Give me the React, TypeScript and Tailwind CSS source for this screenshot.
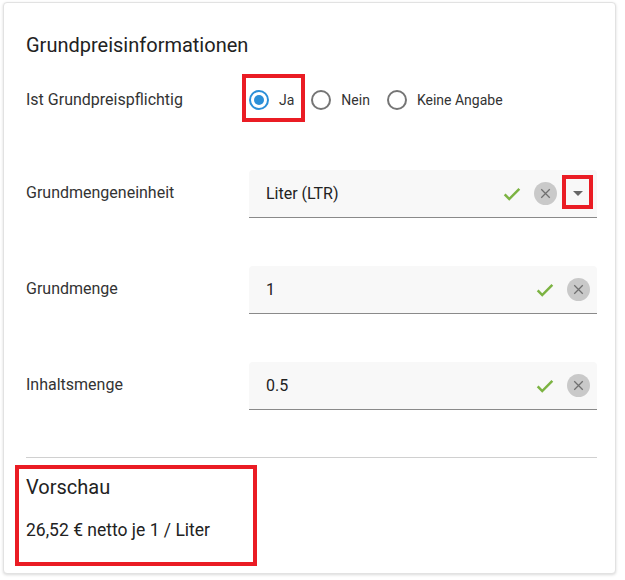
import React from "react";

const Check: React.FC = () => (
  <svg viewBox="0 0 24 24" className="w-[22px] h-[22px]">
    <path d="M4 12.5l5 5L20 6.5" fill="none" stroke="#7cb342" strokeWidth="2.8" />
  </svg>
);

const Clear: React.FC = () => (
  <span className="flex items-center justify-center w-[23px] h-[23px] rounded-full bg-[#c9c9c9]">
    <svg viewBox="0 0 24 24" className="w-[17px] h-[17px]">
      <path d="M6 6l12 12M18 6L6 18" fill="none" stroke="#6f6f6f" strokeWidth="1.8" />
    </svg>
  </span>
);

const Radio: React.FC<{ label: string; checked?: boolean }> = ({ label, checked }) => (
  <label className="flex items-center gap-[10px]">
    <span
      className={
        checked
          ? "flex items-center justify-center w-[20px] h-[20px] rounded-full border-2 border-[#2b8fd8]"
          : "flex items-center justify-center w-[20px] h-[20px] rounded-full border-2 border-[#757575]"
      }
    >
      {checked && <span className="w-[10px] h-[10px] rounded-full bg-[#2b8fd8]" />}
    </span>
    <span className="text-[14px] text-[#333]">{label}</span>
  </label>
);

const Field: React.FC<{ label: string; value: string; select?: boolean }> = ({
  label,
  value,
  select,
}) => (
  <div className="flex items-center h-[48px]">
    <div className="w-[223px] text-[16px] text-[#333] -mt-[3px]">{label}</div>
    <div className="relative flex-1 h-full flex items-center bg-[#f8f8f8] border-b border-[#8a8a8a] rounded-t-[4px] pl-[17px] pr-[7px]">
      <span className="flex-1 text-[16px] text-[#222]">{value}</span>
      <span className="mr-[11px]">
        <Check />
      </span>
      <Clear />
      {select && (
        <span className="relative ml-[9px] w-[24px] h-[24px] flex items-center justify-center">
          <span className="w-0 h-0 border-l-[5px] border-r-[5px] border-t-[5px] border-l-transparent border-r-transparent border-t-[#666]" />
          <span className="absolute -left-[4px] -top-[7px] w-[31px] h-[34px] border-4 border-[#ea1c24]" />
        </span>
      )}
    </div>
  </div>
);

export default function App() {
  return (
    <div className="w-[625px] h-[580px] bg-white pt-[2px] pl-[3px] font-['Roboto',sans-serif]">
      <div className="w-[613px] h-[572px] rounded-[4px] border border-[#e2e2e2] shadow-[0_1px_3px_rgba(0,0,0,0.15)] bg-white pl-[22px] pr-[18px] pt-[30px]">
        <h2 className="text-[20px] leading-6 text-[#222]">Grundpreisinformationen</h2>

        <div className="flex items-center h-[40px] mt-[23px]">
          <div className="w-[223px] text-[16px] text-[#333]">Ist Grundpreispflichtig</div>
          <div className="flex items-center gap-[17px]">
            <div className="relative">
              <Radio label="Ja" checked />
              <span className="absolute -left-[7px] -top-[16px] w-[63px] h-[48px] border-4 border-[#ea1c24]" />
            </div>
            <Radio label="Nein" />
            <Radio label="Keine Angabe" />
          </div>
        </div>

        <div className="mt-[50px] flex flex-col gap-[48px]">
          <Field label="Grundmengeneinheit" value="Liter (LTR)" select />
          <Field label="Grundmenge" value="1" />
          <Field label="Inhaltsmenge" value="0.5" />
        </div>

        <div className="mt-[47px] border-t border-[#d0d0d0]" />

        <div className="relative mt-[17px]">
          <h3 className="text-[20px] leading-6 text-[#222]">Vorschau</h3>
          <p className="mt-[19px] text-[17.5px] leading-6 text-[#222]">26,52 € netto je 1 / Liter</p>
          <span className="absolute -left-[11px] -top-[10px] w-[242px] h-[101px] border-4 border-[#ea1c24]" />
        </div>
      </div>
    </div>
  );
}
